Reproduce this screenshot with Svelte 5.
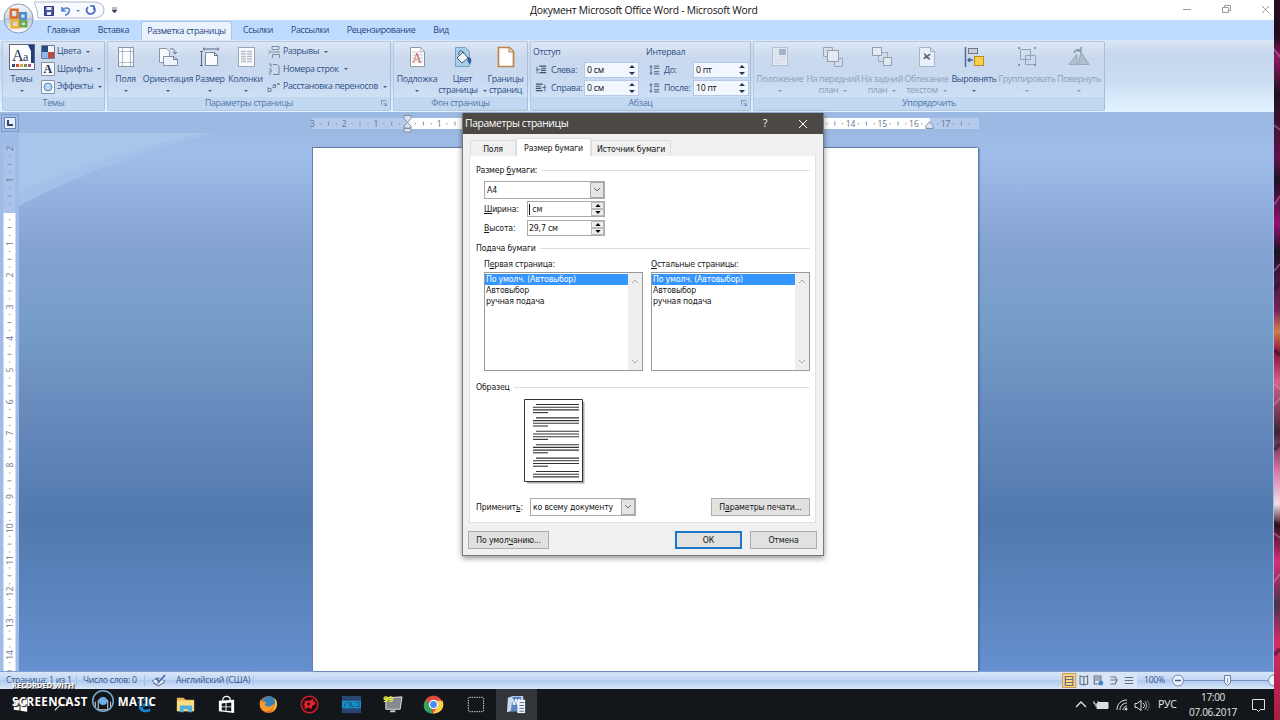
<script lang="ts">
	const tabs = [
		{ label: 'Главная', width: 51 },
		{ label: 'Вставка', width: 49 },
		{ label: 'Разметка страницы', width: 91, active: true },
		{ label: 'Ссылки', width: 52 },
		{ label: 'Рассылки', width: 52 },
		{ label: 'Рецензирование', width: 90 },
		{ label: 'Вид', width: 30 }
	];

	const pageTools = [
		{ icon: 'margins', lines: ['Поля'], width: 35 },
		{ icon: 'orientation', lines: ['Ориентация'], width: 50 },
		{ icon: 'size', lines: ['Размер'], width: 34 },
		{ icon: 'columns', lines: ['Колонки'], width: 37 }
	];

	const backgroundTools = [
		{ icon: 'watermark', lines: ['Подложка'], width: 46 },
		{ icon: 'color', lines: ['Цвет', 'страницы'], width: 45 },
		{ icon: 'borders', lines: ['Границы', 'страниц'], width: 41, plain: true }
	];

	const arrangeTools = [
		{ icon: 'position', lines: ['Положение'], width: 52, off: true },
		{ icon: 'front', lines: ['На передний', 'план'], width: 54, off: true },
		{ icon: 'back', lines: ['На задний', 'план'], width: 44, off: true },
		{ icon: 'wrap', lines: ['Обтекание', 'текстом'], width: 45, off: true },
		{ icon: 'align', lines: ['Выровнять'], width: 50 },
		{ icon: 'group', lines: ['Группировать'], width: 56, off: true },
		{ icon: 'rotate', lines: ['Повернуть'], width: 48, off: true }
	];

	const sources = ['По умолч. (Автовыбор)', 'Автовыбор', 'ручная подача'];
	const apps = ['start', 'search', 'tasks', 'edge', 'folder', 'store', 'firefox', 'red', 'blue', 'monitor', 'chrome', 'dashed', 'word'];

	const unit = 31.65;
	// the middle of the ruler lies under the dialog
	const horizontal = [-3, -2, -1, 0, 1, 13, 14, 15, 16, 17];
	const vertical = Array.from({ length: 17 }, (_, i) => i - 2);
	const previewLines = Array.from({ length: 23 }, (_, i) => i);

	let width = $state('');
	let height = $state('29,7 см');
	let selectedFirst = $state(0);
	let selectedOther = $state(0);
</script>

{#snippet bigIcon(name: string)}
	<svg class="big-icon" viewBox="0 0 26 26">
		{#if name === 'themes'}
			<rect x=".5" y=".5" width="25" height="25" fill="#fff" stroke="#5a6980" />
			<path d="M19 1h6v18h-3V7z" fill="#1f3d7c" />
			<text x="3" y="17" font-size="16" font-family="Liberation Serif, serif" fill="#1f3560">A</text>
			<text x="14" y="17" font-size="12" font-family="Liberation Serif, serif" fill="#1f3560">a</text>
			<path d="M3 21.5h3" stroke="#334d80" stroke-width="3" />
			<path d="M7 21.5h3" stroke="#c25430" stroke-width="3" />
			<path d="M11 21.5h3" stroke="#e0a23b" stroke-width="3" />
			<path d="M15 21.5h3" stroke="#6b9050" stroke-width="3" />
			<path d="M19 21.5h3" stroke="#aa4e87" stroke-width="3" />
		{:else if name === 'margins'}
			<rect x="5.5" y="3.5" width="15" height="19" fill="#fbfcfe" stroke="#8a95a8" />
			<path d="M9.500 4v18M17.500 4v18M6 7.500h14M6 18.500h14" stroke="#9aa9be" stroke-width=".8" />
		{:else if name === 'orientation'}
			<path d="M4.500 4.500h7l3 3v11h-10z" fill="#f8fafd" stroke="#8995a8" />
			<path d="M8.500 12.500h10l4 3v6h-14z" fill="#f0f4fa" stroke="#8290a6" />
			<path d="M18.500 12.500v3h4M15 5c4-1 5 1 5 4m-2-1 2 2 2-2" fill="none" stroke="#68778e" />
		{:else if name === 'size'}
			<path d="M8.500 8.500h9l3 3v10h-12z" fill="#fbfcfe" stroke="#7d899c" />
			<path d="M17.500 8.500v3h3M6 5h16M4.500 7.500v14M7 3.500v3M21 3.500v3M3 7.500h3M3 21.500h3" fill="none" stroke="#5c6a82" />
		{:else if name === 'columns'}
			<rect x="5.500" y="3.500" width="16" height="19" fill="#fbfcfe" stroke="#9ba5b4" />
			<path d="M8 7.500h5M14 7.500h5M8 10h5M14 10h5M8 12.500h5M14 12.500h5M8 15h5M14 15h5M8 17.500h5M14 17.500h5" stroke="#b6bdc8" stroke-width="1.300" />
		{:else if name === 'watermark'}
			<path d="M6.500 3.500h10l4 4v15h-14z" fill="#fff" stroke="#8b97a9" />
			<path d="M16.500 3.500v4h4M8 8h11M8 11h11M8 14h11M8 17h11" fill="none" stroke="#a9b2c0" stroke-width=".7" />
			<text x="8" y="18.500" font-size="14" font-family="Liberation Serif, serif" fill="#d9706c">A</text>
		{:else if name === 'color'}
			<path d="M5.500 3.500h10l4 4v15h-14z" fill="#a6cfec" stroke="#7d9fbd" />
			<path d="m7 14 6-6 5 6-6 5z" fill="#f1f5fa" stroke="#445c78" />
			<path d="M9 11C7 6 13 5 14 10" fill="none" stroke="#445c78" />
			<path d="M18 13c4 1 4 4 2 7-2-1-3-3-2-7" fill="#315a98" />
		{:else if name === 'borders'}
			<path d="M5.500 3.500h11l4 4v15h-15z" fill="#fff" stroke="#c08348" stroke-width="1.700" />
			<path d="M16 4v4h4" fill="#f5dfc0" stroke="#b87d45" />
		{:else if name === 'position'}
			<rect x="5.500" y="3.500" width="15" height="18" fill="#e3e9f3" stroke="#b4c0d2" />
			<rect x="12" y="5" width="7" height="6" fill="#a6b2c4" />
			<path d="M7 7h4M7 10h4M7 13h12M7 16h12M7 19h8" stroke="#d0d8e4" />
		{:else if name === 'front'}
			<path d="M3.500 3.500h9v9h-9zM14.500 14.500h8v8h-8z" fill="#d6deea" stroke="#98a6b9" />
			<rect x="7.500" y="6.500" width="11" height="11" fill="#e4e9f2" stroke="#8e9db3" />
		{:else if name === 'back'}
			<rect x="9.500" y="8.500" width="9" height="9" fill="#d4dce8" stroke="#9cabc0" />
			<path d="M3.500 3.500h9v8h-9zM14.500 13.500h8v8h-8z" fill="#e3e9f2" stroke="#8e9db3" />
		{:else if name === 'wrap'}
			<path d="M5.500 3.500h11l4 4v15h-15z" fill="#eaf0f8" stroke="#a5b4c9" />
			<path d="M16.500 3.500v4h4" fill="none" stroke="#98a8be" />
			<path d="M10 10c2 0 2 4 6 5m-6 0c1-3 4-2 6-5" fill="none" stroke="#52647f" stroke-width="1.700" />
		{:else if name === 'align'}
			<path d="M4.500 3v20" stroke="#536b9b" stroke-width="1.500" />
			<rect x="7.500" y="4.500" width="9" height="5" fill="#c8cdd5" stroke="#69768c" />
			<rect x="13.500" y="12.500" width="9" height="9" fill="#f6cf47" stroke="#b49029" />
			<path d="M12 16H7m2-2-2 2 2 2" fill="none" stroke="#415c9d" stroke-width="1.300" />
		{:else if name === 'group'}
			<path d="M6.500 5.500h10v10h-10zM11.500 11.500h10v9h-10z" fill="none" stroke="#94a3b9" />
			<path d="M4 3h2v2H4zM20 3h2v2h-2zM4 20h2v2H4zM20 20h2v2h-2z" fill="#8293ab" />
		{:else}
			<path d="M3 20.500 11 10v10.500zM12 20.500 15 8l8 12.500z" fill="#b2becd" stroke="#98a6b9" />
			<path d="M8 9c1-4 6-4 7-2m0-4v4h-4" fill="none" stroke="#8797af" stroke-width="1.500" />
		{/if}
	</svg>
{/snippet}

{#snippet bigTool(tool: any)}
	<button class="big-tool" class:off={tool.off} style:width="{tool.width}px">
		{@render bigIcon(tool.icon)}
		{#each tool.lines as line, i}
			<span class="line">
				{line}{#if i === 1 && !tool.plain}<i class="arrow side"></i>{/if}
			</span>
		{/each}
		{#if tool.lines.length === 1}<i class="arrow"></i>{/if}
	</button>
{/snippet}

{#snippet smallIcon(name: string)}
	<svg class="small-icon" viewBox="0 0 14 14">
		{#if name === 'colors'}
			<path d="M1 1h6v6H1z" fill="#274d80" /><path d="M7 1h6v6H7z" fill="#f5f7fb" /><path d="M1 7h6v6H1z" fill="#8bb9e8" /><path d="M7 7h6v6H7z" fill="#bd4944" />
			<path d="M.500.500h13v13H.500z" fill="none" stroke="#6e7e98" />
		{:else if name === 'fonts'}
			<path d="M.500.500h13v13H.500z" fill="#f9fbff" stroke="#8492a9" />
			<text x="2.500" y="11" font-size="12" font-weight="bold" font-family="Liberation Serif, serif" fill="#172c4e">A</text>
		{:else if name === 'effects'}
			<path d="M.500.500h13v13H.500z" fill="#f9fbff" stroke="#8492a9" /><circle cx="7" cy="7" r="4" fill="#b8d6f5" stroke="#5d85bd" />
		{:else if name === 'breaks'}
			<path d="M5 1.500h7v3H5zM5.500 13V9.500h7V13M4 7h9M1.500 5l2 2-2 2" fill="none" stroke="#7d8da6" />
		{:else if name === 'numbers'}
			<path d="M6 2.500h4l2 2v8H6M2 2h2v3M2 7h2v3H2M2 12h2" fill="none" stroke="#7082a0" />
		{:else if name === 'hyphen'}
			<text x="0" y="12" font-size="8" fill="#425672">b</text><text x="5" y="8" font-size="8" fill="#425672">a</text><path d="M10 4h3" stroke="#425672" />
		{:else if name === 'left' || name === 'right'}
			<g transform={name === 'right' ? 'translate(14 0) scale(-1 1)' : undefined}>
				<path d="M5 2.500h8M7 5h6M7 7.500h6M5 10h8" stroke="#44536b" stroke-width="1.300" /><path d="M1 6.500h5M2.500 3v8" stroke="#4a668f" />
			</g>
		{:else}
			<path d="M3.500 2v10M2 4l1.500-2L5 4M2 10l1.500 2L5 10" fill="none" stroke="#3f5e99" /><path d="M7 2.500h6M7 5h6M7 9h6M7 11.500h6" stroke="#68768d" stroke-width="1.500" />
		{/if}
	</svg>
{/snippet}

{#snippet spinner()}
	<svg class="spinner" viewBox="0 0 8 14"><path d="m1 5 3-3 3 3zM1 9h6l-3 3z" fill="#26364f" /></svg>
{/snippet}

{#snippet launcher()}
	<svg class="launcher" viewBox="0 0 7 7"><path d="M.500 6V.500H6M3 3l3 3M6.500 3v3.500H3" fill="none" stroke="#6d8ab5" /></svg>
{/snippet}

{#snippet list(title: string, key: string, selected: number, pick: (i: number) => void)}
	<div class="source">
		<span class="source-title">{#if key === 'е'}П<u>е</u>рвая страница:{:else}<u>О</u>стальные страницы:{/if}</span>
		<div class="listbox" role="listbox" aria-label={title}>
			<div class="options">
				{#each sources as source, i}
					<button class="option" class:selected={i === selected} role="option" aria-selected={i === selected} onclick={() => pick(i)}>{source}</button>
				{/each}
			</div>
			<div class="scrollbar">
				<svg viewBox="0 0 8 6"><path d="m1 5 3-3 3 3" /></svg>
				<svg viewBox="0 0 8 6"><path d="m1 1 3 3 3-3" /></svg>
			</div>
		</div>
	</div>
{/snippet}

{#snippet dialogSpin()}
	<span class="dialog-spin">
		<i><svg viewBox="0 0 7 4"><path d="m0 4 3.500-4L7 4z" /></svg></i>
		<i><svg viewBox="0 0 7 4"><path d="m0 0 3.500 4L7 0z" /></svg></i>
	</span>
{/snippet}

<div class="desktop">
	<main class="word">
		<header class="titlebar">
			<div class="quick">
				<svg width="72" height="19" viewBox="0 0 72 19">
					<path d="M0 1h61q9 1 9 8t-9 8H4Q4 8 0 1z" fill="#f7faff" stroke="#acb9cb" />
					<path d="M10.500 5.500h9v9h-9z" fill="#4c51a3" stroke="#33387d" /><path d="M12.500 6h5v3h-5zM13 11h4v3h-4z" fill="#e8efff" />
					<path d="M28 6v4h4m-4 0c3-5 9-3 7 1-1 2-3 3-4 3" fill="none" stroke="#5f86d1" stroke-width="1.700" />
					<path d="M42 9h4l-2 2z" fill="#7185a8" />
					<path d="M54 6c-3 3-1 7 3 7 4-1 5-4 3-7m-4-1h4v4" fill="none" stroke="#466cc1" stroke-width="1.700" />
				</svg>
				<svg width="7" height="7" viewBox="0 0 7 7"><path d="M1 1h5M1 3h5L3.500 6z" fill="#344055" stroke="#344055" stroke-width=".7" /></svg>
			</div>
			<h1>Документ Microsoft Office Word - Microsoft Word</h1>
			<svg class="window-buttons" viewBox="0 0 94 20">
				<path d="M3 9.500h8M42.500 7.500h6v5h-6zM44.500 7v-1.500h6v5H49M82 6l7 7M89 6l-7 7" fill="none" stroke="#999" />
			</svg>
		</header>

		<nav class="tabs">
			{#each tabs as tab}
				<button class:active={tab.active} style:width="{tab.width}px">{tab.label}</button>
			{/each}
		</nav>

		<section class="ribbon">
			<article class="group themes">
				<div class="tools">
					<button class="big-tool" style:width="37px">{@render bigIcon('themes')}<span class="line">Темы</span><i class="arrow"></i></button>
					<div class="small-tools">
						<button>{@render smallIcon('colors')}Цвета<i class="arrow side"></i></button>
						<button>{@render smallIcon('fonts')}Шрифты<i class="arrow side"></i></button>
						<button>{@render smallIcon('effects')}Эффекты<i class="arrow side"></i></button>
					</div>
				</div>
				<footer>Темы</footer>
			</article>
			<article class="group page-setup">
				<div class="tools">
					{#each pageTools as tool}{@render bigTool(tool)}{/each}
					<div class="small-tools wide">
						<button>{@render smallIcon('breaks')}Разрывы<i class="arrow side"></i></button>
						<button>{@render smallIcon('numbers')}Номера строк<i class="arrow side"></i></button>
						<button>{@render smallIcon('hyphen')}Расстановка переносов<i class="arrow side"></i></button>
					</div>
				</div>
				<footer>Параметры страницы{@render launcher()}</footer>
			</article>
			<article class="group background">
				<div class="tools">{#each backgroundTools as tool}{@render bigTool(tool)}{/each}</div>
				<footer>Фон страницы</footer>
			</article>
			<article class="group paragraph">
				<div class="tools">
					<div class="measures">
						<b>Отступ</b>
						<label>{@render smallIcon('left')}<span>Слева:</span><em>0 см{@render spinner()}</em></label>
						<label>{@render smallIcon('right')}<span>Справа:</span><em>0 см{@render spinner()}</em></label>
					</div>
					<div class="measures interval">
						<b>Интервал</b>
						<label>{@render smallIcon('before')}<span>До:</span><em>0 пт{@render spinner()}</em></label>
						<label>{@render smallIcon('after')}<span>После:</span><em>10 пт{@render spinner()}</em></label>
					</div>
				</div>
				<footer>Абзац{@render launcher()}</footer>
			</article>
			<article class="group arrange">
				<div class="tools">{#each arrangeTools as tool}{@render bigTool(tool)}{/each}</div>
				<footer>Упорядочить</footer>
			</article>
		</section>

		<section class="workspace">
			<div class="ruler-row">
				<span class="tab-stop"><svg viewBox="0 0 12 12"><path d="M.500.500h11v11H.500z" fill="#e7effc" stroke="#6681b5" /><path d="M4 3v5h5" fill="none" stroke="#334669" stroke-width="2" /></svg></span>
				<svg class="horizontal-ruler" width="667" height="20" viewBox="312 113 667 20">
					<path d="M312 118h667v11H312z" fill="#b4cbed" />
					<path d="M407 118h523v11H407z" fill="#fff" />
					{#each horizontal as n}
						{@const x = 407.5 + n * unit}
						{#if n !== 0 && n !== 13}<text {x} y="127">{Math.abs(n)}</text>{/if}
						<path d="M{x + unit / 2} 121.500v4" />
						<path d="M{x + unit / 4} 123v1.300M{x + (unit * 3) / 4} 123v1.300" />
					{/each}
					<path class="marker" d="M404 115.500h7v3l-3.500 4-3.500-4zM404 128v-2l3.500-3.500L411 126v2zM404 128.500h7v3.500h-7zM926 128.500v-3l3.500-3.500 3.500 3.500v3z" />
				</svg>
			</div>
			<div class="document">
				<svg class="vertical-ruler" width="19" height="538" viewBox="0 133 19 538">
					<path d="M0 133h19v538H0z" fill="#9fbce6" /><path d="M3.500 147h12v66h-12z" fill="#aac3e9" /><path d="M3.500 213h12v458h-12z" fill="#fff" />
					{#each vertical as n}
						{@const y = 211.800 + n * unit}
						{#if n !== 0}<text transform="translate(13 {y}) rotate(-90)">{Math.abs(n)}</text>{/if}
						<path d="M7.500 {y + unit / 2}h4M9 {y + unit / 4}h1.300M9 {y + (unit * 3) / 4}h1.300" />
					{/each}
				</svg>
				<div class="canvas">
					<svg class="swoosh" viewBox="0 0 210 76"><path d="M0 0h197C126 17 56 43 0 73z" fill="#a3c0e8" /><path d="M0 0h185C120 14 56 34 0 59z" fill="#aac5ea" /></svg>
					<div class="page"></div>
				</div>
			</div>
		</section>

		<footer class="status">
			<span class="pages">Страница: 1 из 1</span>
			<span class="words">Число слов: 0</span>
			<svg class="proof" width="18" height="14" viewBox="0 0 18 14"><path d="m2 7 6-3 7 3-6 5z" fill="#eef3fa" stroke="#70819e" /><path d="M3 9 8 12l7-4M8 4v6" fill="none" stroke="#70819e" /><path d="m6 4 3 4 6-7" fill="none" stroke="#4c69ad" stroke-width="1.700" /></svg>
			<span class="language">Английский (США)</span>
			<svg class="views" width="75" height="17" viewBox="0 0 79 17" preserveAspectRatio="none">
				<path d="M0 0h79v17H0z" fill="#d8e5f8" /><path d="M.500 1.500h14v14H.500z" fill="#fbd183" stroke="#c49a55" />
				<path d="M3.500 4.500h8v9h-8zM4 7.500h7M4 10.500h7M19 4l4 1 4-1v8l-4 1-4-1zM23 5v8M34 4h7v8h-7zM35 6h5M35 8h5M51 5h5l2 3-2 4h-5M51 8h6M66 5.500h9M66 8.500h9M66 11.500h9" fill="none" stroke="#677181" stroke-width="1.200" /><circle cx="41" cy="11" r="2.500" fill="#4785bd" />
			</svg>
			<span class="zoom-value">100%</span>
			<svg class="zoom" width="102" height="18" viewBox="0 0 102 18">
				<path d="M11 8.500h87" stroke="#7994c0" /><circle cx="6" cy="8.500" r="5.500" fill="#e9f1fc" stroke="#7185aa" /><path d="M3 8.500h6" stroke="#485c7c" stroke-width="1.500" />
				<path d="M52.500 3.500h6v7l-3 3-3-3z" fill="#edf4fe" stroke="#697c9b" /><path d="M55.500 6v5" stroke="#859ab8" /><circle cx="102" cy="8.500" r="5.500" fill="#e9f1fc" stroke="#7185aa" />
			</svg>
		</footer>

		<nav class="taskbar">
			{#each apps as app}
				<button class:running={app === 'word'} aria-label={app}>
					<svg viewBox="0 0 22 22">
						{#if app === 'start'}
							<path d="M4 6.500 10 5.700V11H4zM11 5.500 18 4.500V11h-7zM4 12h6v5.300L4 16.500zM11 12h7v6.500l-7-1z" fill="#fff" />
						{:else if app === 'search'}
							<circle cx="12.500" cy="8.500" r="4.500" fill="none" stroke="#ddd" stroke-width="1.200" /><path d="m9 12-5 5" stroke="#ddd" stroke-width="1.200" />
						{:else if app === 'tasks'}
							<path d="M6.500 6.500h10v10h-10zM3.500 8v6M19.500 8v8" fill="none" stroke="#ddd" />
						{:else if app === 'edge'}
							<path d="M4 11C5 1 18 1 18 11v2H9c0 4 5 4 8 2v3c-6 3-13 0-12-6 1-3 3-4 5-5-1 1-1 2-1 3h5c0-5-7-4-10 1z" fill="#1683db" />
						{:else if app === 'folder'}
							<path d="M2 4h7l2 2h9v12H2z" fill="#e8ba54" /><path d="M2 7h18v11H2z" fill="#f9de84" /><path d="M5 12h13v7h-4v-3H9v3H5z" fill="#50afdc" />
						{:else if app === 'store'}
							<path d="m3 7 16-1v14L3 18z" fill="#fff" /><path d="M7 7c0-6 8-6 8 0" fill="none" stroke="#fff" stroke-width="1.300" /><path d="m6 10 4-.500V13H6zM11 9.500l5-.500v4h-5zM6 14h4v3.500L6 17zM11 14h5v4l-5-.500z" fill="#14171b" />
						{:else if app === 'firefox'}
							<circle cx="11" cy="11" r="9" fill="#ec6b20" /><circle cx="11.500" cy="8.500" r="6.500" fill="#3480ba" /><path d="M3 5c0 4 3 2 6 4l-2 2c3 4 8 2 9-1 2 4-3 9-8 8-5 0-8-6-5-13z" fill="#f39b2c" /><path d="M17 4c5 4 3 13-3 15 3-4 5-8 3-15z" fill="#f6c541" />
						{:else if app === 'red'}
							<circle cx="11" cy="11" r="8.700" fill="#240a0e" stroke="#d11e2c" stroke-width="1.500" /><path d="M6 7h5l4-2v3h2v3l-3 1-1 4-3-2-4 2v-4H4l2-2z" fill="#e42330" /><circle cx="10" cy="10.500" r="1.500" fill="#240a0e" />
						{:else if app === 'blue'}
							<path d="M1 2h20v18H1z" fill="#29466f" /><path d="M1 7h20v8H1z" fill="#168fc7" /><path d="M4 9v4M6 9h3v4M11 9v4h3M16 9h3v4h-3" fill="none" stroke="#174f80" />
						{:else if app === 'monitor'}
							<path d="m4 4 17-1-2 13H4z" fill="#858a8e" stroke="#e0e2e4" /><path d="M9 17h5v2H8z" fill="#c6c8ca" /><text x="1" y="8" font-size="8" font-weight="bold" font-family="DejaVu Sans, sans-serif" fill="#e8ee23">99</text>
						{:else if app === 'chrome'}
							<circle cx="11" cy="11" r="9.500" fill="#dd4b3c" /><path d="m3 6 5 7 2 7.500C0 20-1 11 3 6z" fill="#36a45b" /><path d="M12 7h8.500c3 8-3 14-10 13.500L15 13z" fill="#fad047" /><circle cx="11" cy="11" r="4.200" fill="#4c8bf5" stroke="#fff" stroke-width="1.300" />
						{:else if app === 'dashed'}
							<rect x="3.500" y="3.500" width="16" height="15" rx="1" fill="none" stroke="#ddd" stroke-dasharray="1.500 1" />
						{:else}
							<path d="m2 4 5-2h11v16H5l-4 1z" fill="#c8d8ef" /><path d="M7 3h9v15H5z" fill="#5b83bf" /><path d="M12 6h8v14h-8z" fill="#f4f7fc" /><path d="M14 9h5M14 12h5M14 15h5M14 18h5" stroke="#4564a2" /><text x="6" y="12" font-size="9" font-weight="bold" font-family="Liberation Sans, sans-serif" fill="#fff">W</text>
						{/if}
					</svg>
				</button>
			{/each}
			<div class="tray">
				<svg width="78" height="20" viewBox="0 0 78 20" fill="none" stroke="#e2e2e2">
					<path d="m2 12 5-5 5 5" stroke-width="1.300" />
					<path d="M24 7.500h10v6H23v-4" fill="#ddd" /><path d="M20 6v3h4V6m-2 3v3" />
					<path d="M43 15C43 9 47 5 53 5M46 15c0-4 3-7 7-7M49 15c0-2 2-4 4-4" /><circle cx="52" cy="14" r="1" fill="#ddd" />
					<path d="M61 8.500h2l4-3v10l-4-3h-2zM69 8c2 2 2 3 0 5M71 6.500c2 3 2 5 0 8" /><path d="M73 5c3 4 3 7 0 11" opacity=".4" />
				</svg>
				<span class="keyboard">РУС</span>
				<time>17:00<br />07.06.2017</time>
				<svg width="16" height="16" viewBox="0 0 16 16"><path d="M1.500 2.500h12v10h-4l-2 2-2-2h-4z" fill="none" stroke="#e0e0e0" /></svg>
			</div>
		</nav>
	</main>
	<svg class="wallpaper" viewBox="0 0 6 720" preserveAspectRatio="none">
		<defs><linearGradient id="wall" x2="0" y2="1"><stop offset="0" stop-color="#280f29" /><stop offset=".05" stop-color="#210b1b" /><stop offset=".08" stop-color="#8c1760" /><stop offset=".13" stop-color="#20111c" /><stop offset=".22" stop-color="#61134c" /><stop offset=".25" stop-color="#1b1424" /><stop offset=".31" stop-color="#94106d" /><stop offset=".35" stop-color="#191225" /><stop offset=".43" stop-color="#75225b" /><stop offset=".46" stop-color="#cf7c4c" /><stop offset=".49" stop-color="#8a123e" /><stop offset=".53" stop-color="#d66187" /><stop offset=".6" stop-color="#3d2438" /><stop offset=".65" stop-color="#d66c9d" /><stop offset=".7" stop-color="#f2dce5" /><stop offset=".73" stop-color="#33111d" /><stop offset=".78" stop-color="#d62f78" /><stop offset=".84" stop-color="#49334f" /><stop offset=".89" stop-color="#d12d67" /><stop offset="1" stop-color="#a51f3f" /></linearGradient></defs>
		<path d="M0 0h6v720H0z" fill="url(#wall)" />
		<path d="M0 49 6 57M0 125l6 5M0 205l6-9M0 271l6-7M0 384l6 5M0 405l6-7M0 533l6 5M0 582l6-8" stroke="#e89ac0" stroke-width="2" opacity=".4" />
		<path d="M0 35 6 41M0 102l6 5M0 290l6-8M0 350l6 5M0 450l6-6M0 522l6 5M0 655l6-6" stroke="#251425" stroke-width="4" opacity=".5" />
	</svg>
</div>

<button class="office" aria-label="Office">
	<svg viewBox="0 0 32 32">
		<defs><linearGradient id="orb" x2="0" y2="1"><stop stop-color="#f7f9fd" /><stop offset=".48" stop-color="#cfd8e5" /><stop offset=".5" stop-color="#b5c4d8" /><stop offset="1" stop-color="#fff" /></linearGradient></defs>
		<circle cx="16" cy="16" r="15" fill="url(#orb)" stroke="#8494ac" />
		<g fill="none" stroke-width="2.500"><path d="M8 7h7v8H8z" stroke="#e16a25" /><path d="M17.500 10.500h6v6h-6z" stroke="#4a8cc9" /><path d="M9 18h7v7H9z" stroke="#f2ae25" /><path d="M18 19h6v5h-6z" stroke="#6ba640" /></g>
	</svg>
</button>

<dialog class="dialog" open>
	<header><h2>Параметры страницы</h2><span>?</span><svg viewBox="0 0 10 10"><path d="m1 1 8 8M9 1 1 9" stroke="#fff" /></svg></header>
	<div class="dialog-tabs"><button>Поля</button><button class="current">Размер бумаги</button><button>Источник бумаги</button></div>
	<section class="panel">
		<h3>Размер <u>б</u>умаги:</h3>
		<div class="paper">
			<div class="combo paper-size">A4<i><svg viewBox="0 0 8 6"><path d="m1 1 3 3 3-3" /></svg></i></div>
			<label class="first-field"><span><u>Ш</u>ирина:</span><em><b class="caret"></b>{width} см{@render dialogSpin()}</em></label>
			<label><span><u>В</u>ысота:</span><em>{height}{@render dialogSpin()}</em></label>
		</div>
		<h3>Подача бумаги</h3>
		<div class="sources">
			{@render list('Первая страница', 'е', selectedFirst, (i) => (selectedFirst = i))}
			{@render list('Остальные страницы', 'О', selectedOther, (i) => (selectedOther = i))}
		</div>
		<h3>Образец</h3>
		<svg class="preview" viewBox="0 0 62 86">
			<path d="M3 3h57.500v81.500H3z" fill="#888" opacity=".7" /><path d="M.500.500h58v82H.500z" fill="#fff" stroke="#333" />
			{#each previewLines as n}
				{@const y = 5.500 + Math.floor(n / 4) * 13.400 + (n % 4) * 2.700}
				<path d="M{n % 4 === 0 ? 12 : 9} {y}H{n % 4 === 3 ? 24 : 55}" stroke="#333" stroke-width="1.100" />
			{/each}
		</svg>
		<div class="apply"><span>Применит<u>ь</u>:</span><div class="combo">ко всему документу<i><svg viewBox="0 0 8 6"><path d="m1 1 3 3 3-3" /></svg></i></div><button>П<u>а</u>раметры печати...</button></div>
	</section>
	<footer><button class="default">По умол<u>ч</u>анию...</button><button class="ok">ОК</button><button>Отмена</button></footer>
</dialog>

<aside class="recording">
	<small>RECORDED WITH</small>
	<div><span>SCREENCAST</span><svg viewBox="0 0 24 24"><circle cx="12" cy="12" r="10.300" fill="none" stroke="#76a9ca" stroke-width="1.500" /><circle cx="12" cy="12" r="4" fill="#67afe7" /></svg><span>MATIC</span></div>
</aside>

<style>
	:global(body) {
		overflow: hidden;
	}

	.desktop,
	.dialog,
	.recording {
		font-family: 'Open Sans', 'Noto Sans', sans-serif;
		font-size: 8.800px;
		line-height: 11px;
		letter-spacing: -0.300px;
	}

	.desktop {
		display: flex;
		width: 1280px;
		height: 720px;
	}

	.word {
		width: 1274px;
		display: flex;
		flex-direction: column;
	}

	.wallpaper {
		width: 6px;
		height: 720px;
	}

	button {
		border: 0;
		padding: 0;
		background: none;
		color: inherit;
		font: inherit;
		letter-spacing: inherit;
		white-space: nowrap;
	}

	h1,
	h2,
	h3 {
		margin: 0;
		font-weight: normal;
	}

	em,
	b {
		font-style: normal;
		font-weight: normal;
	}

	.titlebar {
		height: 20px;
		display: grid;
		grid-template-columns: 530px 1fr 94px;
		align-items: center;
		background: #fff;
	}

	.quick {
		display: flex;
		align-items: center;
		gap: 5px;
		padding-left: 34px;
	}

	h1 {
		font-size: 10.300px;
		letter-spacing: -0.250px;
		line-height: 20px;
		color: #111;
	}

	.window-buttons {
		width: 94px;
		height: 20px;
	}

	.tabs {
		height: 20px;
		box-sizing: border-box;
		padding: 1px 0 0 38px;
		display: flex;
		background: #bfdbff;
		color: #27467d;
	}

	.tabs .active {
		margin-left: 3px;
		background: #eaf2fd;
		border: 1px solid #a9c5ec;
		border-bottom: 0;
		border-radius: 3px 3px 0 0;
	}

	.ribbon {
		height: 73px;
		box-sizing: border-box;
		padding: 1px 0 1px 2px;
		display: flex;
		gap: 2px;
		background: linear-gradient(#dce7f6, #c7d8ed 18%, #cadcf1 55%, #e0f2ff 95%);
		border-bottom: 1px solid #9dbbe2;
		color: #304f86;
	}

	.group {
		box-sizing: border-box;
		display: flex;
		flex-direction: column;
		border: 1px solid #b4c9e5;
		border-right-color: #a7bddb;
		border-radius: 2px;
		background: linear-gradient(#dde7f5, #c9d8ed 25%, #c8dbf1 60%, #d5e6f8);
	}

	.themes { width: 103px; }
	.page-setup { width: 284px; }
	.background { width: 135px; }
	.paragraph { width: 221px; }
	.arrange { width: 352px; }

	.tools {
		height: 56px;
		display: flex;
	}

	.group footer {
		position: relative;
		height: 13px;
		line-height: 13px;
		text-align: center;
		background: #c1d8f1;
		color: #5474aa;
	}

	.launcher {
		position: absolute;
		right: 3px;
		top: 3px;
		width: 6px;
		height: 6px;
	}

	.big-tool {
		flex: none;
		display: flex;
		flex-direction: column;
		align-items: center;
		padding-top: 2px;
	}

	.big-icon {
		width: 26px;
		height: 26px;
		margin-bottom: 4px;
	}

	.line {
		display: flex;
		align-items: center;
	}

	.off .line {
		color: #8e9db5;
	}

	.off .arrow {
		opacity: 0.5;
	}

	.arrow {
		width: 0;
		height: 0;
		border: 2px solid transparent;
		border-top-color: #405a86;
		border-bottom: 0;
		margin-top: 5px;
	}

	.arrow.side {
		margin: 0 0 0 5px;
	}

	.small-tools {
		margin-left: 1px;
		padding-top: 1px;
		display: flex;
		flex-direction: column;
	}

	.small-tools button {
		height: 17.500px;
		display: flex;
		align-items: center;
	}

	.small-icon {
		width: 14px;
		height: 14px;
		margin-right: 2px;
	}

	.wide {
		margin-left: 3px;
	}

	.measures {
		width: 113px;
		padding: 5px 0 0 2px;
		box-sizing: border-box;
	}

	.measures b {
		display: block;
		height: 14px;
	}

	.measures label {
		height: 18px;
		display: grid;
		grid-template-columns: 18px 33px 55px;
		align-items: center;
	}

	.measures.interval {
		width: 106px;
	}

	.interval label {
		grid-template-columns: 18px 29px 56px;
	}

	.measures .small-icon {
		width: 12px;
		height: 12px;
		margin-left: 2px;
	}

	.measures em {
		height: 16px;
		display: flex;
		align-items: center;
		justify-content: space-between;
		box-sizing: border-box;
		padding: 0 2px;
		border: 1px solid #b7cae5;
		background: #f2f7ff;
		color: #111;
	}

	.spinner {
		width: 8px;
		height: 14px;
	}

	.workspace {
		height: 558px;
		background: linear-gradient(#9ab3dc, #a0beeb 7%, #84a3d3 24%, #769dc9 38%, #678abc 54%, #5179ae 73%, #5b84bd 86%, #668fcf);
	}

	.ruler-row {
		height: 20px;
		display: flex;
		background: #9cb9e3;
	}

	.tab-stop {
		width: 312px;
		padding: 4px 0 0 4px;
		box-sizing: border-box;
	}

	.tab-stop svg {
		display: block;
		width: 12px;
		height: 12px;
		outline: 1px solid #8199c9;
		outline-offset: 2px;
	}

	.horizontal-ruler,
	.vertical-ruler {
		overflow: visible;
		font-size: 8.500px;
		letter-spacing: 0;
		text-anchor: middle;
		fill: #64748e;
	}

	.horizontal-ruler path:not([fill]),
	.vertical-ruler path:not([fill]) {
		stroke: #8290a5;
	}

	.horizontal-ruler .marker {
		fill: #dae5f3;
		stroke: #76869e;
	}

	.document {
		height: 538px;
		display: flex;
	}

	.canvas {
		position: relative;
		width: 1255px;
		padding: 15px 0 0 294px;
		box-sizing: border-box;
		border-right: 1px solid #9dbce9;
	}

	.swoosh {
		position: absolute;
		left: 0;
		top: 0;
		width: 210px;
		height: 76px;
	}

	.page {
		width: 665px;
		height: 523px;
		background: #fff;
		box-shadow: -1px -1px #68809f, 1px 0 2px #3d5f91;
	}

	.status {
		height: 18px;
		display: flex;
		align-items: center;
		box-sizing: border-box;
		border-top: 1px solid #809fcf;
		background: linear-gradient(#d8e6f9, #c2d6f3 45%, #b1caef 50%, #d9e6f9);
		color: #38568e;
		white-space: nowrap;
	}

	.status span {
		box-sizing: border-box;
	}

	.pages,
	.words,
	.language {
		padding-left: 6px;
		border-right: 1px solid #a9c1e6;
	}

	.pages { width: 77px; }
	.words { width: 68px; }
	.language { width: 84px; }
	.proof { margin: 0 2px 0 5px; }
	.views { margin-left: auto; }
	.zoom-value { width: 35px; text-align: center; }

	.taskbar {
		height: 31px;
		display: flex;
		background: #13171b;
		color: #e8e8e8;
	}

	.taskbar button {
		flex: none;
		width: 41.400px;
		display: flex;
		align-items: center;
		justify-content: center;
	}

	.taskbar button:first-child {
		width: 40.700px;
	}

	.taskbar button svg {
		width: 21px;
		height: 21px;
	}

	.taskbar .running {
		background: #32363b;
	}

	.tray {
		display: flex;
		align-items: center;
		margin-left: auto;
		padding-right: 7px;
	}

	.keyboard {
		width: 18px;
		margin: 0 12px 0 6px;
		font-size: 10.500px;
	}

	.tray time {
		width: 50px;
		margin-right: 13px;
		font-size: 10px;
		line-height: 15px;
		text-align: center;
	}

	.office {
		position: absolute;
		left: 3px;
		top: 3px;
		width: 31px;
		height: 31px;
	}

	.office svg {
		display: block;
	}

	.dialog {
		position: absolute;
		left: 462px;
		top: 113px;
		margin: 0;
		padding: 0;
		width: 362px;
		height: 443px;
		box-sizing: border-box;
		border: 1px solid #777;
		border-top: 0;
		background: #f0f0f0;
		box-shadow: 0 2px 6px rgba(0, 0, 0, 0.45);
		font-family: 'DejaVu Sans Condensed', 'DejaVu Sans', sans-serif;
		font-size: 8.700px;
		letter-spacing: -0.180px;
		color: #151515;
	}

	.dialog > header {
		height: 21px;
		display: grid;
		grid-template-columns: 298px 35px 10px;
		align-items: center;
		padding-left: 2px;
		background: #4b4845;
		color: #fff;
		font-family: 'Open Sans', sans-serif;
	}

	.dialog > header h2,
	.dialog > header span {
		font-size: 10.300px;
		letter-spacing: -0.350px;
	}

	.dialog > header svg {
		width: 10px;
		height: 10px;
	}

	.dialog-tabs {
		height: 22px;
		display: flex;
		align-items: flex-end;
		padding-left: 7px;
	}

	.dialog-tabs button {
		height: 16px;
		box-sizing: border-box;
		border: 1px solid #ddd;
		border-bottom: 0;
		padding-top: 2px;
		width: 46px;
	}

	.dialog-tabs button:last-child {
		width: 80px;
	}

	.dialog-tabs .current {
		width: 75px;
		height: 18px;
		padding-top: 2px;
		background: #fff;
	}

	.panel {
		margin-left: 6px;
		width: 347px;
		height: 367px;
		padding: 8px 5px 0 6px;
		box-sizing: border-box;
		background: #fff;
		border: 1px solid #e1e1e1;
		border-top: 0;
	}

	h3 {
		height: 12px;
		display: flex;
		align-items: center;
		white-space: pre;
		font-size: inherit;
	}

	h3::after {
		content: '';
		height: 1px;
		flex: 1;
		margin-left: 4px;
		background: #ddd;
	}

	.paper {
		height: 66px;
		padding: 5px 0 0 8px;
		box-sizing: border-box;
	}

	.combo {
		display: flex;
		align-items: center;
		justify-content: space-between;
		box-sizing: border-box;
		height: 18px;
		border: 1px solid #aaa;
		padding-left: 2px;
		background: #fff;
	}

	.combo i {
		width: 14px;
		height: 100%;
		display: flex;
		align-items: center;
		justify-content: center;
		box-sizing: border-box;
		border: 1px solid #aaa;
		background: #e4e4e4;
	}

	.combo svg,
	.scrollbar svg {
		width: 8px;
		height: 6px;
		fill: none;
		stroke: #666;
	}

	.scrollbar svg {
		stroke: #aaa;
	}

	.paper-size {
		width: 121px;
	}

	.paper label {
		display: grid;
		grid-template-columns: 43px 78px;
		align-items: center;
		height: 16px;
		margin-top: 3px;
	}

	.paper .first-field {
		margin-top: 2px;
	}

	.paper em {
		display: flex;
		align-items: center;
		height: 16px;
		box-sizing: border-box;
		border: 1px solid #aaa;
		padding-left: 1px;
		white-space: pre;
	}

	.caret {
		width: 1px;
		height: 11px;
		background: #111;
	}

	.dialog-spin {
		display: flex;
		flex-direction: column;
		margin-left: auto;
		width: 13px;
		height: 14px;
		white-space: normal;
	}

	.dialog-spin i {
		height: 7px;
		display: flex;
		align-items: center;
		justify-content: center;
		box-sizing: border-box;
		border: 1px solid #bbb;
		background: #eee;
	}

	.dialog-spin svg {
		width: 6px;
		height: 3px;
	}

	.sources {
		height: 127px;
		padding: 5px 0 0 8px;
		box-sizing: border-box;
		display: flex;
		gap: 8px;
	}

	.source {
		width: 159px;
	}

	.source-title {
		display: block;
		height: 13px;
	}

	.listbox {
		height: 99px;
		display: flex;
		box-sizing: border-box;
		border: 1px solid #999;
	}

	.options {
		flex: 1;
		padding-top: 1px;
	}

	.option {
		display: block;
		width: 100%;
		height: 11px;
		padding-left: 1px;
		text-align: left;
	}

	.option.selected {
		background: #3395fd;
		color: #fff;
	}

	.scrollbar {
		width: 14px;
		display: flex;
		flex-direction: column;
		justify-content: space-between;
		align-items: center;
		padding: 5px 0;
		box-sizing: border-box;
		background: #eee;
	}

	.preview {
		display: block;
		width: 62px;
		height: 86px;
		margin: 6px 0 0 48px;
	}

	.apply {
		display: grid;
		grid-template-columns: 54px 106px 99px;
		align-items: center;
		margin-top: 13px;
	}

	.apply button {
		margin-left: 75px;
		width: 99px;
	}

	.apply button,
	.dialog > footer button {
		height: 18px;
		box-sizing: border-box;
		border: 1px solid #adadad;
		background: #e1e1e1;
	}

	.dialog > footer {
		display: flex;
		padding: 8px 6px 0 5px;
	}

	.dialog > footer button {
		width: 67px;
	}

	.dialog > footer .default {
		width: 81px;
	}

	.dialog > footer .ok {
		margin: 0 8px 0 auto;
		border: 2px solid #1978c8;
	}

	.recording {
		position: absolute;
		left: 12px;
		top: 680px;
		color: #fff;
		font-weight: bold;
		letter-spacing: 0;
		text-shadow: 1px 1px 1px #111;
	}

	.recording small {
		display: block;
		font-size: 7.500px;
		line-height: 10px;
	}

	.recording div {
		display: flex;
		align-items: center;
		height: 22px;
		font-size: 11.500px;
		letter-spacing: 0.400px;
	}

	.recording svg {
		width: 24px;
		height: 24px;
		margin: 0 3px;
	}
</style>
